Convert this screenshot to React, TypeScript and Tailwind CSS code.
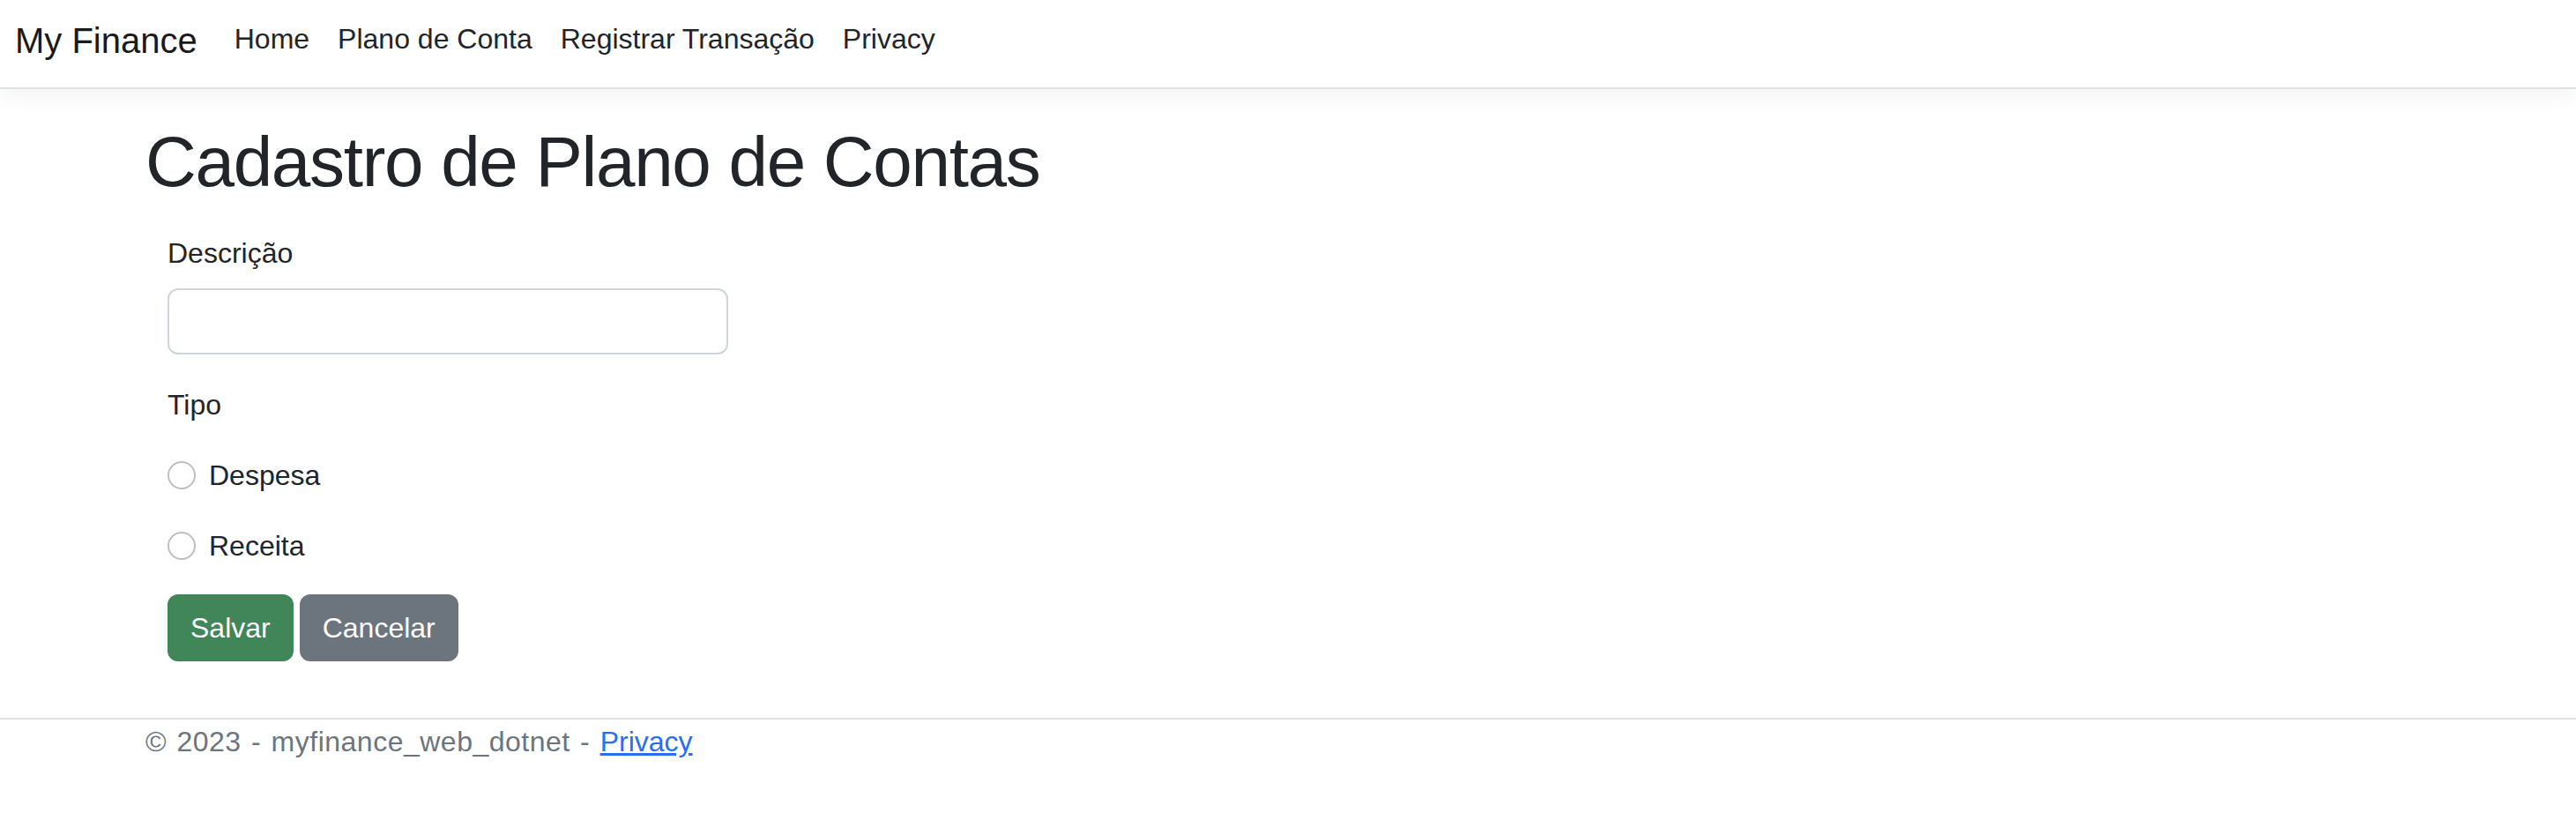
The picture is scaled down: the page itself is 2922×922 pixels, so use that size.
const links = ['Home', 'Plano de Conta', 'Registrar Transação', 'Privacy'];

function Navbar() {
  return (
    <header className="h-[101px] border-b-2 border-[#dee2e6] bg-white shadow-[0_8px_24px_rgba(0,0,0,0.05)] flex items-start pl-[17px]">
      <a href="#" className="mt-[16px] mr-[26px] text-[40px] leading-[60px] text-[#1a1a1a]">
        My Finance
      </a>
      <nav className="mt-[20px] flex">
        {links.map((item) => (
          <a key={item} href="#" className="px-[16px] text-[32px] leading-[48px] text-[#212529]">
            {item}
          </a>
        ))}
      </nav>
    </header>
  );
}

function Radio({ label }: { label: string }) {
  return (
    <label className="mt-[32px] flex h-[48px] items-center gap-[15px] text-[32px] leading-[48px]">
      <input
        type="radio"
        name="tipo"
        className="m-0 h-[32px] w-[32px] appearance-none rounded-full border-2 border-[#bfbfbf] bg-white"
      />
      <span>{label}</span>
    </label>
  );
}

export default function App() {
  return (
    <div className="h-[922px] overflow-hidden bg-white font-['Liberation_Sans',Arial,sans-serif] text-[#212529]">
      <Navbar />

      <main className="mx-auto max-w-[2640px] px-[24px]">
        <h1 className="mt-[35px] text-[80px] leading-[96px] font-medium tracking-[-1.3px]">
          Cadastro de Plano de Contas
        </h1>

        <form className="pl-[25px]">
          <label className="mt-[31px] block text-[32px] leading-[48px]">Descrição</label>
          <input
            type="text"
            className="mt-[16px] block h-[75px] w-[636px] rounded-[12px] border-2 border-[#ced4da] bg-white px-[24px] text-[32px] outline-none"
          />

          <div className="mt-[33px] text-[32px] leading-[48px]">Tipo</div>
          <Radio label="Despesa" />
          <Radio label="Receita" />

          <div className="mt-[31px] flex gap-[7px]">
            <button
              type="button"
              className="rounded-[12px] border-2 border-[#408659] bg-[#408659] px-[24px] py-[12px] text-[32px] leading-[48px] text-white"
            >
              Salvar
            </button>
            <button
              type="button"
              className="rounded-[12px] border-2 border-[#6c757d] bg-[#6c757d] px-[24px] py-[12px] text-[32px] leading-[48px] text-white"
            >
              Cancelar
            </button>
          </div>
        </form>
      </main>

      <footer className="mt-[64px] border-t-2 border-[#dee2e6] pt-[1px]">
        <div className="mx-auto max-w-[2640px] px-[24px] text-[32px] leading-[48px] text-[#6c757d] whitespace-nowrap tracking-[0.5px] [word-spacing:2px]">
          &copy; 2023 - myfinance_web_dotnet -{' '}
          <a href="#" className="text-[#2a6ef5] underline tracking-normal">
            Privacy
          </a>
        </div>
      </footer>
    </div>
  );
}
